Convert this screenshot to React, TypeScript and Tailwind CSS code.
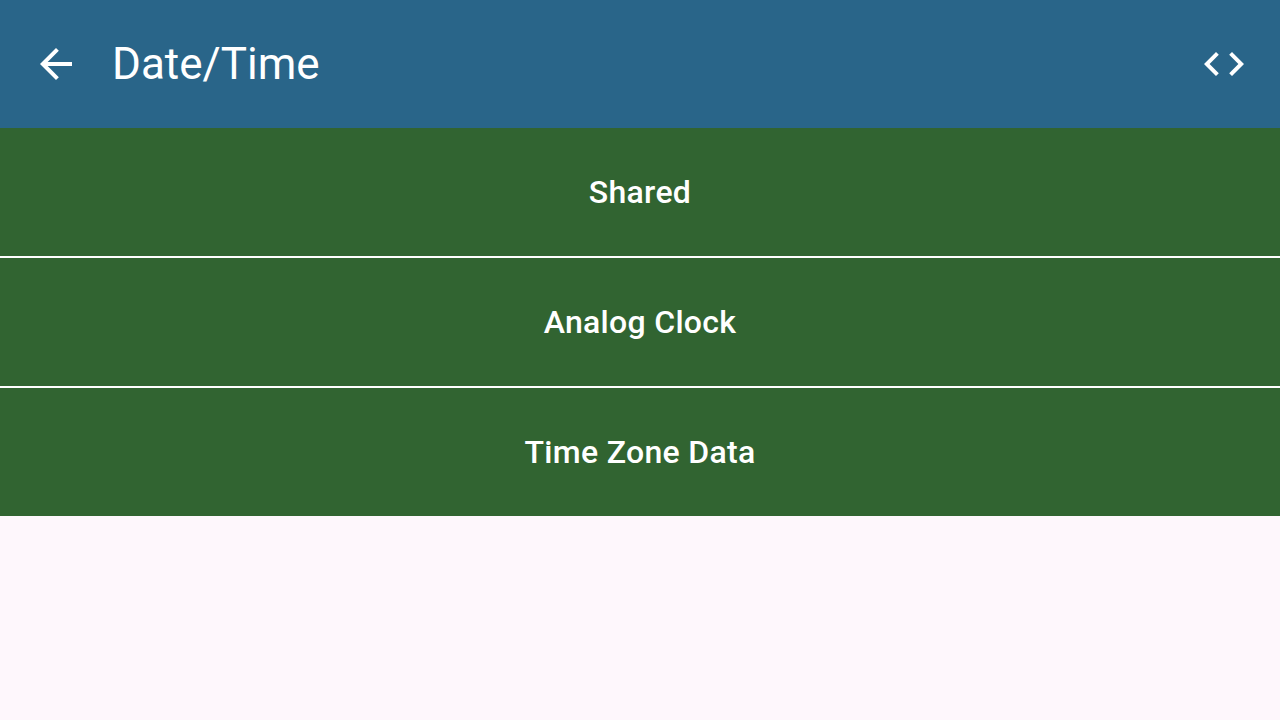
export default function App() {
  const items = ["Shared", "Analog Clock", "Time Zone Data"];
  return (
    <div
      className="w-[1280px] h-[720px] bg-[#fef7fc] flex flex-col"
      style={{ fontFamily: "Roboto, 'Liberation Sans', sans-serif" }}
    >
      {/* App bar */}
      <div className="h-[128px] bg-[#296589] flex items-center px-[32px] text-white shrink-0">
        <div className="w-[48px] h-[48px] flex items-center justify-center">
          <svg viewBox="0 0 24 24" width="48" height="48" fill="white">
            <path d="M20 11H7.83l5.59-5.59L12 4l-8 8 8 8 1.41-1.41L7.83 13H20v-2z" />
          </svg>
        </div>
        <div className="ml-[32px] text-[44px] leading-none">Date/Time</div>
        <div className="ml-auto w-[48px] h-[48px] flex items-center justify-center">
          <svg viewBox="0 0 24 24" width="48" height="48" fill="white">
            <path d="M9.4 16.6L4.8 12l4.6-4.6L8 6l-6 6 6 6 1.4-1.4zm5.2 0l4.6-4.6-4.6-4.6L16 6l6 6-6 6-1.4-1.4z" />
          </svg>
        </div>
      </div>

      {/* List */}
      <div className="flex flex-col">
        {items.map((label, i) => (
          <div key={label} className="flex flex-col">
            {i > 0 && <div className="h-[2px] bg-white" />}
            <div className="h-[128px] bg-[#316431] flex items-center justify-center text-white text-[32px] font-medium tracking-[0.3px]">
              {label}
            </div>
          </div>
        ))}
      </div>
    </div>
  );
}
